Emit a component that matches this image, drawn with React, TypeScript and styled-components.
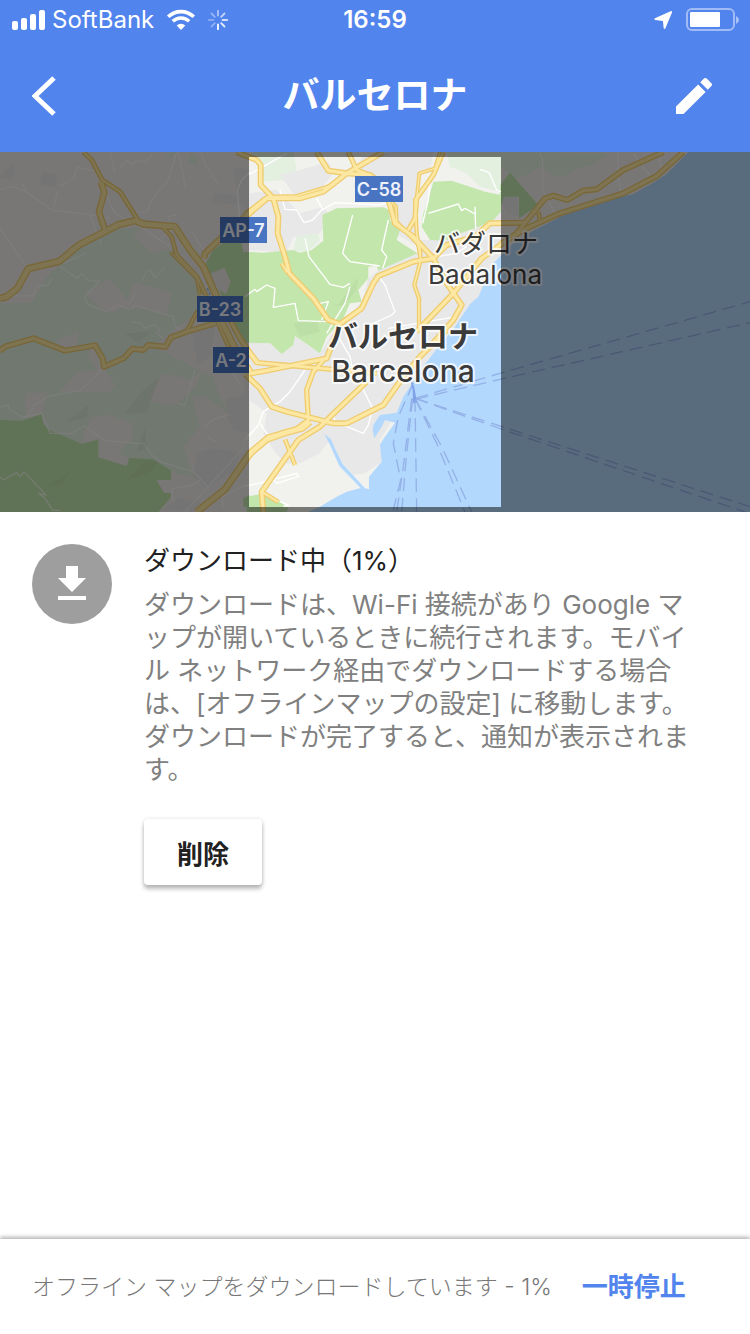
import React from "react";
import styled, { createGlobalStyle } from "styled-components";

const latin = `Inter, "Noto Sans CJK JP", sans-serif`;

const GlobalStyle = createGlobalStyle`
  *, *::before, *::after { box-sizing: border-box; }
  body { margin: 0; background: #fff; font-family: ${latin}; }
  button { font-family: inherit; border: 0; padding: 0; background: none; cursor: pointer; }
  svg { display: block; }
`;

const Screen = styled.div`
  min-height: 100vh;
  display: flex;
  flex-direction: column;
  background: #fff;
`;

const TopBar = styled.header`
  background: #5284ed;
  color: #fff;
`;

const StatusBar = styled.div`
  display: grid;
  grid-template-columns: 1fr auto 1fr;
  align-items: center;
  height: 40px;
  padding: 0 11px;
  font-size: 24px;
  line-height: 28px;
`;

const StatusGroup = styled.div<{ $end?: boolean }>`
  display: flex;
  align-items: center;
  gap: ${(p) => (p.$end ? 12 : 0)}px;
  justify-content: ${(p) => (p.$end ? "flex-end" : "flex-start")};
`;

const Carrier = styled.span`
  margin: 0 12px 0 7px;
`;

const Clock = styled.time`
  font-weight: 600;
`;

const SpinnerIcon = styled.svg`
  margin-left: 12px;
`;

const NavBar = styled.div`
  display: grid;
  grid-template-columns: 48px 1fr 48px;
  align-items: center;
  height: 112px;
  padding: 0 32px;
`;

const Title = styled.h1`
  margin: 0;
  text-align: center;
  font-size: 37px;
  font-weight: 700;
  line-height: 48px;
`;

const IconButton = styled.button`
  width: 48px;
  height: 48px;
  color: #fff;
`;

const MapView = styled.section`
  height: 360px;
  background: #5a6b7d;
`;

const Details = styled.main`
  flex: 1;
  display: flex;
  gap: 32px;
  padding: 32px;
`;

const DownloadBadge = styled.div`
  flex: none;
  display: grid;
  place-items: center;
  width: 80px;
  height: 80px;
  border-radius: 50%;
  background: #9e9e9e;
`;

const DetailsBody = styled.div`
  flex: 1;
  min-width: 0;
`;

const Heading = styled.h2`
  margin: 0;
  color: #212121;
  font-size: 26px;
  font-weight: 400;
  line-height: 34px;
`;

const Description = styled.p`
  margin: 10px 20px 33px 0;
  color: #808080;
  font-size: 26px;
  font-weight: 400;
  line-height: 33px;
  line-break: loose;
`;

const DeleteButton = styled.button`
  && {
    width: 118px;
    height: 66px;
    border-radius: 4px;
    background: #fff;
    color: #212121;
    font-size: 26px;
    font-weight: 700;
    box-shadow: 0 4px 4px rgba(0, 0, 0, 0.26), 0 0 4px rgba(0, 0, 0, 0.12);
  }
`;

const Footer = styled.footer`
  display: flex;
  align-items: center;
  gap: 30px;
  height: 95px;
  padding: 0 32px;
  background: #fff;
  box-shadow: 0 -2px 4px rgba(0, 0, 0, 0.3);
`;

const Progress = styled.p`
  margin: 0;
  color: #777;
  font-size: 23px;
  font-weight: 300;
  line-height: 32px;
`;

const PauseButton = styled.button`
  && {
    color: #5284ed;
    font-size: 26px;
    font-weight: 700;
    line-height: 38px;
  }
`;

const PlaceName = styled.text<{ $size: number; $weight: number }>`
  font-family: ${latin};
  font-size: ${(p) => p.$size}px;
  font-weight: ${(p) => p.$weight};
  fill: #3a3a3a;
  stroke: rgba(255, 255, 255, 0.75);
  stroke-width: 4px;
  stroke-linejoin: round;
  paint-order: stroke;
  text-anchor: middle;
`;

const ShieldText = styled.text`
  font-family: ${latin};
  font-size: 18px;
  font-weight: 600;
  fill: #eef1fa;
  text-anchor: middle;
`;

/* Terrain is digitised on a 2250-unit wide grid. */
const SEA =
  "2065,6 2000,72 1960,98 1900,132 1885,136 1868,136 1770,168 1690,196 1600,242 1545,275 1505,315 1480,340 1435,440 1410,462 1365,530 1335,566 1300,610 1265,656 1210,740 1190,788 1140,795 1120,825 1118,840 1123,865 1145,830 1155,810 1185,818 1148,870 1140,885 1145,935 1107,980 1107,1018 1095,1015 1075,993 1028,942 1007,900 993,868 973,852 990,885 1018,948 1082,1014 1040,1025 1010,1040 960,1070 925,1086 2250,1086 2250,6";

const PALE_GREEN = [
  "355,235 425,235 400,258 460,312 505,296 585,385 603,440 590,490 520,540 460,590 560,640 585,655 640,680 660,738 690,795 620,740 575,740 600,830 550,890 585,985 513,965 460,928 388,924 350,910 395,870 395,820 330,795 270,803 245,882 148,848 125,792 65,812 0,810 0,460 95,458 140,380 185,340 250,290",
  "490,10 530,6 515,25",
  "570,10 595,20 590,48 565,35",
  "760,6 880,6 890,60 850,90 790,95",
  "890,255 950,240 960,270 920,308 880,300",
  "1340,6 1503,6 1503,125 1440,110 1400,70 1350,50",
  "1500,6 1825,10 1780,45 1735,55 1680,85 1620,50 1580,75 1545,88 1500,50",
];

const LAND_PATCH = [
  "75,730 145,728 130,765 125,792 90,805 75,785",
  "170,570 235,545 230,590 180,600",
  "255,430 330,385 390,462 335,490 300,470",
  "370,480 400,395 515,430 500,495 430,470",
  "275,590 305,610 310,650 345,705 330,725 180,725 230,670 290,660 265,620",
  "470,700 490,670 575,690 615,645 585,712 525,765 448,755",
  "270,825 330,795 395,822 385,875 350,915 380,948 295,922 295,868 245,850",
  "545,590 580,570 580,640 635,640 640,670 600,660",
];

const CLEARING = "632,370 673,353 692,395 678,432 650,415";

const GREY_PATCH = [
  "0,80 42,38 38,85 10,88",
  "128,65 172,75 165,112 120,102",
  "640,130 720,138 716,165 636,158",
  "700,50 750,60 750,180 715,160",
  "580,545 645,530 630,620 590,645",
  "680,745 750,735 750,850 700,840 680,800",
  "590,910 640,895 720,910 700,965 620,1015 580,980",
  "480,1080 540,1045 600,1055 580,1086",
  "750,130 830,120 900,190 970,170 990,200 960,250 880,260 860,308 747,300",
  "840,75 900,60 985,35 1000,70 960,120 890,145",
  "1085,20 1170,6 1300,6 1290,60 1250,80 1240,200 1260,290 1180,250 1185,175 1060,110",
  "1503,140 1550,140 1558,200 1520,190",
];

const URBAN =
  "735,578 810,580 845,612 880,585 885,558 960,610 990,560 1040,500 1085,455 1105,385 1140,358 1250,310 1260,270 1330,270 1503,185 1503,315 1435,440 1365,530 1265,656 1190,788 1140,870 1145,935 1095,970 1060,975 1028,940 990,870 960,910 900,940 855,940 820,900 790,850 800,790 735,740";

const PARK = [
  "0,810 65,812 125,792 130,820 148,840 200,862 245,882 295,868 295,922 380,948 388,924 460,928 513,962 513,990 470,990 492,1028 513,1030 513,1042 475,1086 0,1086",
  "640,300 670,278 725,280 730,305 790,308 880,300 900,308 935,300 970,272 967,195 1010,175 1150,172 1168,180 1170,210 1200,240 1190,270 1252,310 1135,362 1130,348 1105,350 1105,385 1075,420 1085,455 1050,460 1030,505 980,560 960,610 925,585 885,558 880,585 845,612 810,580 735,578 700,520 655,415 612,350",
  "1300,95 1355,92 1455,125 1503,135 1503,185 1475,215 1425,235 1365,255 1335,272 1290,270 1265,230 1270,190 1285,150",
  "1500,105 1530,68 1615,165 1557,205 1557,140 1512,140 1500,180",
  "740,1040 795,1030 840,1055 865,1075 860,1086 740,1086",
  "730,1045 750,1035 750,1070 730,1070",
];

const SHADE = [
  "380,990 440,930 475,935 455,965",
  "140,1008 210,965 185,1005",
  "375,550 452,545 415,580",
  "1010,470 1075,380 1070,420 1030,470 1000,460",
  "880,520 950,510 960,545 900,560",
  "435,830 440,895 410,905",
  "195,820 265,765 262,800",
  "375,790 430,720 480,680 440,790",
];

const STREETS = [
  "0,118 38,110 78,125 155,180 265,193 330,205",
  "0,235 80,350",
  "160,178 173,122", "68,100 78,122",
  "180,110 222,85 230,52 308,68",
  "330,10 345,66", "360,52 380,30 400,45 410,30 440,38 455,12",
  "530,8 502,95 455,150 440,185 400,188", "535,8 550,80 558,118",
  "602,8 620,50 655,105",
  "310,120 345,190 430,235 480,270 512,290",
  "270,195 305,288", "475,270 515,240 505,200 530,195",
  "572,242 612,302",
  "180,350 232,385 245,370 265,392 300,393 253,440 265,465 320,485 355,465 388,478",
  "180,345 258,310", "35,438 100,437 112,408 145,405 155,385",
  "395,475 405,467 520,500 525,530 560,548", "385,465 410,425",
  "425,395 440,362 452,362 465,385 495,350",
  "395,517 420,518 435,535 465,523 480,540 470,550 490,565",
  "0,772 25,765 28,778 70,802 88,792 103,765 148,738 240,722 310,655",
  "70,802 125,790 150,850 213,850 253,828 315,872 432,882 460,920 485,937 580,965 625,1012",
  "0,980 10,990 50,968 60,980 72,965 138,1035 115,1030 135,1045 158,1080 182,1082",
  "585,658 555,767 533,760", "620,860 648,875", "615,830 640,808 685,795",
  "555,1086 735,890", "517,1050 517,1015 570,1008 600,992", "670,1070 665,1040 750,1000",
  "700,670 720,705", "750,65 725,90 712,120 718,200",
  "745,75 860,10",
  "840,120 855,178 890,180 912,218 938,210 965,180 1005,158 1140,165 1170,155",
  "950,145 970,182",
  "1058,195 1028,310 1050,335 1140,348", "1165,210 1145,300 1160,320 1148,355",
  "915,265 927,320 990,403 1030,412 1050,400",
  "735,440 765,418 770,425 800,405 825,415 820,472 885,460 895,512 980,515",
  "1050,410 1035,460 980,550", "960,460 985,455 965,510",
  "1140,385 1155,405 1185,485 1175,495 1100,530",
  "1285,190 1375,162 1385,182 1395,175 1425,192", "1425,170 1427,235",
  "1440,58 1468,68 1490,120 1503,125", "1290,95 1285,150 1268,220",
  "1165,535 1370,500", "1310,320 1370,310 1400,290",
  "915,660 870,725 840,755 790,785 775,825 735,870",
  "780,820 800,850 845,860", "1015,560 1050,620 1060,670",
  "1085,710 1118,775 1105,825 1090,850 1005,815 1000,790",
  "735,1010 890,970 895,980 830,1000 820,990", "840,1055 865,1065 850,1070",
  "1620,10 1628,30 1628,120 1665,190", "1853,10 1855,80 1862,125", "1900,10 1950,78", "1978,20 1985,62",
];

const ROADS: { pts: string; w: number }[] = [
  { pts: "250,6 275,30 307,90 360,125 415,212", w: 15 },
  { pts: "303,96 313,128 297,185 315,240", w: 20 },
  { pts: "0,445 20,440 52,415 85,356 178,334 238,284 355,224 405,212 430,222 525,230 570,300 610,350 650,440 665,515 705,595 750,665", w: 22 },
  { pts: "425,218 485,228 515,260 530,315 590,378 620,440 650,510 690,600", w: 14 },
  { pts: "512,306 590,385 600,435", w: 12 },
  { pts: "0,603 15,590 100,565 195,602 285,586 308,625 312,650 372,624 397,596 430,600 445,585 497,590 513,562 560,545 645,520", w: 18 },
  { pts: "560,545 590,487 610,485", w: 14 },
  { pts: "612,325 615,310 680,248 800,145", w: 20 },
  { pts: "690,510 720,565 750,610 775,640", w: 18 },
  { pts: "590,1086 675,1018 750,910 800,868 850,850 905,835 930,815", w: 22 },
  { pts: "710,6 770,30 782,45 782,105 820,145 835,200 833,250 855,320 868,370 940,445 985,510 1020,522", w: 18 },
  { pts: "845,340 860,365 866,345", w: 14 },
  { pts: "735,195 800,145 900,145 970,125 1040,70 1150,6", w: 18 },
  { pts: "800,140 890,138 1000,105 1032,70", w: 12 },
  { pts: "950,6 985,62 1040,70 1110,75 1150,105 1170,165 1185,220 1240,260 1300,325 1340,400 1385,465 1360,510 1290,590", w: 18 },
  { pts: "1045,6 1070,60 1110,76", w: 16 },
  { pts: "1165,145 1188,170 1190,215 1260,290 1262,330", w: 12 },
  { pts: "1330,6 1300,75 1250,145 1245,205 1225,240", w: 16 },
  { pts: "1320,6 1305,55 1258,70 1250,145", w: 12 },
  { pts: "1245,145 1250,250 1262,330 1243,405 1257,445 1257,540", w: 13 },
  { pts: "1020,522 1085,475 1120,400 1135,378 1240,335 1300,325 1340,285 1425,260 1470,220 1575,218", w: 18 },
  { pts: "1250,545 1360,430 1445,325 1550,250 1570,225 1635,145 1660,137 1702,150 1750,122 1790,118 1870,60 1990,6", w: 18 },
  { pts: "1503,280 1580,235 1680,190 1870,130 1970,78 2050,6", w: 18 },
  { pts: "1615,185 1620,212", w: 14 },
  { pts: "725,570 770,638 850,645 1040,662 1130,670", w: 16 },
  { pts: "735,673 800,662 980,625 1020,520", w: 18 },
  { pts: "735,672 780,715 815,770 860,785 1000,820 1040,820 1150,765 1210,680 1260,620 1340,540", w: 18 },
  { pts: "975,625 940,665 920,720 925,810 885,840 805,860 735,930", w: 16 },
  { pts: "1100,695 960,830 895,870 785,1025 790,1086", w: 18 },
  { pts: "785,1025 835,1056", w: 14 },
  { pts: "855,868 885,945", w: 14 },
];

const FERRIES = [
  "1245,745 1500,670 2250,455",
  "1245,748 1500,688 2250,518",
  "1245,745 1500,828 2250,1070",
  "1245,745 1500,836 2235,1086",
  "1240,700 1195,800 1180,880 1202,990 1180,1080",
  "1238,745 1218,930 1205,1086",
  "1235,745 1210,950 1190,1086",
  "1245,745 1250,1086",
  "1245,745 1325,890 1415,1086",
  "1245,745 1310,880 1395,1086",
];

function Terrain() {
  return (
    <svg width="750" height="360" viewBox="0 6 2250 1080">
      <rect y="6" width="2250" height="1080" fill="#f3efeb" />
      <rect x="747" y="6" width="756" height="1080" fill="#f1f2ee" />
      {PALE_GREEN.map((p) => <polygon key={p} points={p} fill="#e3f0e0" />)}
      {LAND_PATCH.map((p) => <polygon key={p} points={p} fill="#f3efeb" />)}
      {GREY_PATCH.map((p) => <polygon key={p} points={p} fill="#e8e8e8" />)}
      <polygon points={URBAN} fill="#e8e8e8" />
      {PARK.map((p) => <polygon key={p} points={p} fill="#c3e6ad" />)}
      <polygon points={CLEARING} fill="#efebe8" />
      {SHADE.map((p) => <polygon key={p} points={p} fill="#000" opacity="0.03" />)}
      <polygon points={SEA} fill="#b3d8fd" />
      <g fill="none" strokeLinejoin="round">
        {STREETS.map((p) => {
          const x = Number(p.split(",")[0]);
          const inView = x >= 735 && x < 1503;
          return <polyline key={p} points={p} stroke={inView ? "#fff" : "#ffffffa0"} strokeWidth="4" />;
        })}
        <polyline points="622,415 650,480 668,545" stroke="#8fb4f0" strokeWidth="4" strokeDasharray="8 5" />
        {ROADS.map((r) => <polyline key={r.pts} points={r.pts} stroke="#efcc70" strokeWidth={r.w} />)}
        {ROADS.map((r) => <polyline key={r.pts} points={r.pts} stroke="#fce8a2" strokeWidth={r.w - 8} />)}
        {FERRIES.map((p) => (
          <polyline key={p} points={p} stroke="#94b1e8" strokeWidth="4" strokeDasharray="40 20" />
        ))}
        <polyline points="1235,695 1248,755 1240,710 1242,760" stroke="#7fa3e6" strokeWidth="5" />
      </g>
    </svg>
  );
}

const SHIELDS = [
  { label: "AP-7", x: 220, y: 65, w: 47 },
  { label: "B-23", x: 197, y: 144, w: 46 },
  { label: "A-2", x: 213, y: 195, w: 36 },
  { label: "C-58", x: 355, y: 24, w: 48 },
];

function AreaMap() {
  return (
    <svg width="100%" height="100%" viewBox="0 0 750 360" preserveAspectRatio="xMidYMid slice" role="img" aria-label="バルセロナ">
      <Terrain />
      {SHIELDS.map((s) => (
        <g key={s.label}>
          <rect x={s.x} y={s.y} width={s.w} height="26" fill="#4874c2" />
          <ShieldText x={s.x + s.w / 2} y={s.y + 20}>{s.label}</ShieldText>
        </g>
      ))}
      <PlaceName x="486" y="101" $size={26} $weight={400}>バダロナ</PlaceName>
      <PlaceName x="485" y="132" $size={26} $weight={400}>Badalona</PlaceName>
      <PlaceName x="403" y="195" $size={30} $weight={700}>バルセロナ</PlaceName>
      <PlaceName x="403" y="230" $size={30} $weight={500}>Barcelona</PlaceName>
      <path d="M0 0H750V360H0ZM249 5V355H501V5Z" fillRule="evenodd" fill="#000" opacity="0.5" />
    </svg>
  );
}

const SPOKES = [1, 0.35, 0.3, 0.4, 0.55, 0.65, 0.75, 0.85];

export default function App() {
  return (
    <Screen lang="ja">
      <GlobalStyle />
      <TopBar>
        <StatusBar>
          <StatusGroup>
            <svg width="34" height="20" viewBox="0 0 34 20" fill="#fff" aria-hidden="true">
              <rect x="1" y="11" width="6" height="9" rx="2" />
              <rect x="10" y="8" width="6" height="12" rx="2" />
              <rect x="19" y="4" width="6" height="16" rx="2" />
              <rect x="28" y="0" width="6" height="20" rx="2" />
            </svg>
            <Carrier>SoftBank</Carrier>
            <svg width="30" height="22" viewBox="0 0 30 22" fill="none" aria-hidden="true">
              <path d="M2.2 7.8a18.3 18.3 0 0 1 25.6 0" stroke="#fff" strokeWidth="3.6" />
              <path d="M6.8 12.3a11.8 11.8 0 0 1 16.4 0" stroke="#fff" strokeWidth="3.4" />
              <path d="M15 21l-4.3-4.4a6.2 6.2 0 0 1 8.6 0z" fill="#fff" />
            </svg>
            <SpinnerIcon width="20" height="20" viewBox="-10 -10 20 20" aria-hidden="true">
              {SPOKES.map((o, i) => (
                <path key={i} d="M0 4.5V9.2" stroke="#fff" strokeWidth="1.8" strokeLinecap="round" opacity={o} transform={`rotate(${i * 45})`} />
              ))}
            </SpinnerIcon>
          </StatusGroup>
          <Clock>16:59</Clock>
          <StatusGroup $end>
            <svg width="20" height="20" viewBox="0 0 20 20" fill="#fff" aria-hidden="true">
              <path d="M17.600 1.200Q19.600 .6 19 2.600L12.400 18.200Q11.400 19.800 10.700 18.200L9.900 11 2.200 10Q.4 9.200 1.900 8.200Z" />
            </svg>
            <svg width="54" height="24" viewBox="0 0 54 24" aria-hidden="true">
              <rect x="2" y="1" width="47" height="21" rx="5" fill="none" stroke="#fff" strokeOpacity="0.45" strokeWidth="2" />
              <rect x="5" y="4" width="30" height="15" rx="1" fill="#fff" />
              <path d="M51 8q3 1.500 3 4t-3 4z" fill="#fff" fillOpacity="0.5" />
            </svg>
          </StatusGroup>
        </StatusBar>
        <NavBar>
          <IconButton type="button" aria-label="戻る">
            <svg width="48" height="48" viewBox="0 0 48 48" fill="none" aria-hidden="true">
              <path d="M22 6L3 24l19 18" stroke="#fff" strokeWidth="5" />
            </svg>
          </IconButton>
          <Title>バルセロナ</Title>
          <IconButton type="button" aria-label="編集">
            <svg width="48" height="48" viewBox="0 0 24 24" fill="currentColor" aria-hidden="true">
              <path d="M3 17.250V21h3.750L17.810 9.940l-3.750-3.750L3 17.250zM20.710 7.040c.39-.39.39-1.020 0-1.410l-2.340-2.340c-.39-.39-1.020-.39-1.410 0l-1.830 1.830 3.750 3.750 1.830-1.830z" />
            </svg>
          </IconButton>
        </NavBar>
      </TopBar>
      <MapView>
        <AreaMap />
      </MapView>
      <Details>
        <DownloadBadge>
          <svg width="48" height="48" viewBox="0 0 24 24" fill="#fff" aria-hidden="true">
            <path d="M19 9h-4V3H9v6H5l7 7 7-7zM5 18v2h14v-2H5z" />
          </svg>
        </DownloadBadge>
        <DetailsBody>
          <Heading>ダウンロード中（1%）</Heading>
          <Description>
            ダウンロードは、Wi-Fi 接続があり Google マップが開いているときに続行されます。モバイル ネットワーク経由でダウンロードする場合は、[オフラインマップの設定] に移動します。ダウンロードが完了すると、通知が表示されます。
          </Description>
          <DeleteButton type="button">削除</DeleteButton>
        </DetailsBody>
      </Details>
      <Footer>
        <Progress>オフライン マップをダウンロードしています - 1%</Progress>
        <PauseButton type="button">一時停止</PauseButton>
      </Footer>
    </Screen>
  );
}
